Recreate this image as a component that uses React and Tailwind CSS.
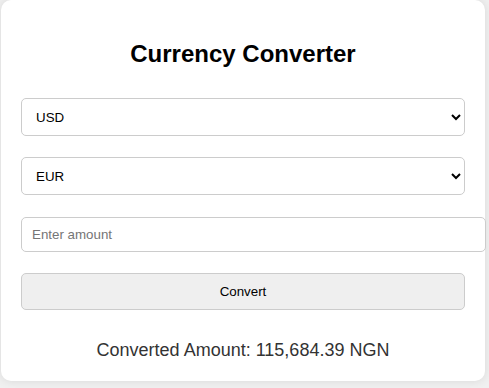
import React, { useState } from "react";

export default function App() {
  const [from, setFrom] = useState("USD");
  const [to, setTo] = useState("EUR");
  return (
    <div className="w-[489px] h-[388px] bg-[#f0f0f0] overflow-hidden" style={{ fontFamily: '"Liberation Sans", Arial, sans-serif' }}>
      <div className="ml-[1px] w-[484px] bg-white rounded-[10px] shadow-[0_0_10px_rgba(0,0,0,0.1)] p-[20px] flex flex-col">
        <h2 className="shrink-0 mt-[20px] h-[28px] leading-[28px] text-[24px] font-bold text-black text-center">Currency Converter</h2>
        <select
          value={from}
          onChange={(e) => setFrom(e.target.value)}
          className="shrink-0 mt-[30px] w-[444px] h-[38px] px-[10px] bg-white border border-[#cccccc] rounded-[5px] text-[13.33px] text-black"
        >
          <option>USD</option>
          <option>EUR</option>
          <option>NGN</option>
        </select>
        <select
          value={to}
          onChange={(e) => setTo(e.target.value)}
          className="shrink-0 mt-[21px] w-[444px] h-[38px] px-[10px] bg-white border border-[#cccccc] rounded-[5px] text-[13.33px] text-black"
        >
          <option>USD</option>
          <option>EUR</option>
          <option>NGN</option>
        </select>
        <input
          type="number"
          placeholder="Enter amount"
          className="shrink-0 mt-[22px] w-[465px] h-[35px] px-[10px] bg-white border border-[#cccccc] rounded-[5px] text-[13.33px] text-black placeholder:text-[#757575] outline-none"
        />
        <button className="shrink-0 mt-[21px] w-[444px] h-[37px] bg-[#efefef] border border-[#cccccc] rounded-[5px] text-[13.33px] text-black">
          Convert
        </button>
        <p className="shrink-0 mt-[30px] h-[21px] leading-[21px] text-[18px] text-[#333333] text-center">
          Converted Amount: 115,684.39 NGN
        </p>
      </div>
    </div>
  );
}
